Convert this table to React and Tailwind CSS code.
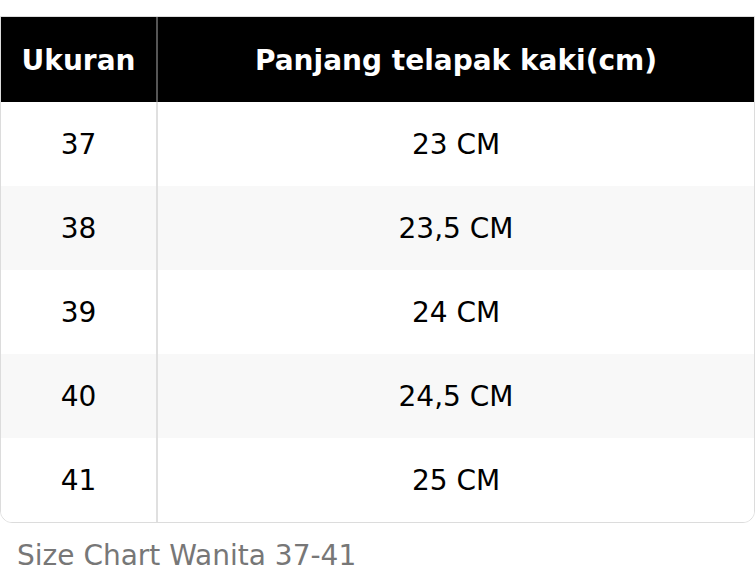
export default function App() {
  const rows = [
    ["37", "23 CM"],
    ["38", "23,5 CM"],
    ["39", "24 CM"],
    ["40", "24,5 CM"],
    ["41", "25 CM"],
  ];
  return (
    <div className="w-[756px] h-[588px] bg-white pt-4" style={{ fontFamily: '"DejaVu Sans", sans-serif' }}>
      <div className="w-[755px] border border-[#dcdcdc] rounded-b-[12px] overflow-hidden">
        <div className="flex h-[86px] bg-black text-white font-bold text-[28px] border-t border-[#666] -mt-px">
          <div className="w-[157px] pt-[2px] flex items-center justify-center border-r-2 border-[#555]">Ukuran</div>
          <div className="flex-1 pt-[2px] flex items-center justify-center">Panjang telapak kaki(cm)</div>
        </div>
        {rows.map((r, i) => (
          <div key={i} className={`flex h-[84px] text-[28px] text-black ${i % 2 === 1 ? "bg-[#f8f8f8]" : "bg-white"}`}>
            <div className="w-[157px] pt-[2px] flex items-center justify-center border-r-2 border-[#e0e0e0]">{r[0]}</div>
            <div className="flex-1 pt-[2px] flex items-center justify-center">{r[1]}</div>
          </div>
        ))}
      </div>
      <div className="pl-[17px] pt-[12px] text-[28px] text-[#777]">Size Chart Wanita 37-41</div>
    </div>
  );
}
